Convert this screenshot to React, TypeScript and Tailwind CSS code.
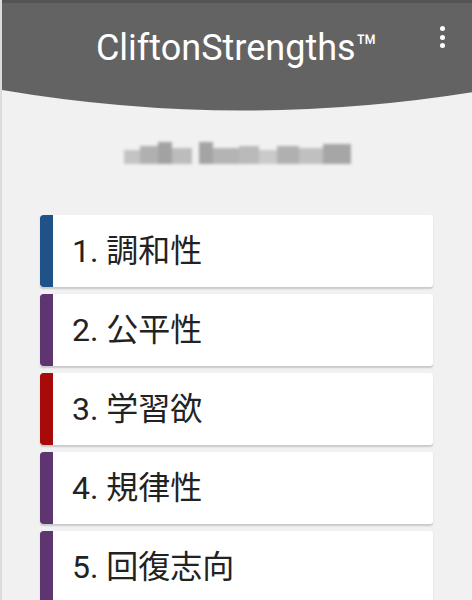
const strengths = [
  { rank: 1, name: '調和性', color: 'bg-[#1f5286]' },
  { rank: 2, name: '公平性', color: 'bg-[#5e3570]' },
  { rank: 3, name: '学習欲', color: 'bg-[#a80a0a]' },
  { rank: 4, name: '規律性', color: 'bg-[#5e3570]' },
  { rank: 5, name: '回復志向', color: 'bg-[#5e3570]' },
]

const font = { fontFamily: 'Roboto, "Noto Sans CJK JP", sans-serif' }

export default function App() {
  return (
    <div className="min-h-[600px] w-[472px] overflow-hidden bg-[#f1f1f1] border-l-2 border-[#dcdcdc]" style={font}>
      <header className="relative">
        <div className="h-[3px] bg-[#545454]" />
        <div className="flex h-[87px] items-center justify-center bg-[#636363] pt-[2px]">
          <h1 className="text-[36px] leading-none text-white">CliftonStrengths™</h1>
        </div>
        <button className="absolute right-[27px] top-[26px] flex flex-col items-center gap-[3.5px] p-0">
          <span className="h-[5px] w-[5px] rounded-full bg-white" />
          <span className="h-[5px] w-[5px] rounded-full bg-white" />
          <span className="h-[5px] w-[5px] rounded-full bg-white" />
        </button>
        <svg className="block" width="472" height="22" viewBox="0 0 472 22">
          <path d="M0 0 H472 V2 Q236 40 0 0 Z" fill="#636363" />
        </svg>
      </header>

      <div className="mt-[30px] flex justify-center gap-[7px] blur-[1.5px]">
        <div className="flex h-[22px] w-[68px] items-end">
          <div className="h-[14px] w-[16px] bg-[#c4c4c4]" />
          <div className="h-[18px] w-[18px] bg-[#b0b0b0]" />
          <div className="h-[22px] w-[14px] bg-[#a2a2a2]" />
          <div className="h-[16px] w-[20px] bg-[#bcbcbc]" />
        </div>
        <div className="flex h-[22px] w-[152px] items-end">
          <div className="h-[22px] w-[14px] bg-[#a4a4a4]" />
          <div className="h-[16px] w-[26px] bg-[#b4b4b4]" />
          <div className="h-[18px] w-[20px] bg-[#bababa]" />
          <div className="h-[14px] w-[18px] bg-[#cacaca]" />
          <div className="h-[18px] w-[22px] bg-[#b0b0b0]" />
          <div className="h-[16px] w-[24px] bg-[#c0c0c0]" />
          <div className="h-[20px] w-[28px] bg-[#a6a6a6]" />
        </div>
      </div>

      <ul className="mt-[51px] flex flex-col gap-[7px] pl-[38px] pr-[39px]">
        {strengths.map((s) => (
          <li
            key={s.rank}
            className="flex h-[72px] overflow-hidden rounded-[3px] bg-white shadow-[0_1.5px_1.5px_rgba(0,0,0,0.16)]"
          >
            <div className={`w-[13px] shrink-0 rounded-l-[3px] ${s.color}`} />
            <div className="flex items-center pl-[19px] text-[32px] leading-none text-[#222]">
              {s.rank}. {s.name}
            </div>
          </li>
        ))}
      </ul>
    </div>
  )
}
